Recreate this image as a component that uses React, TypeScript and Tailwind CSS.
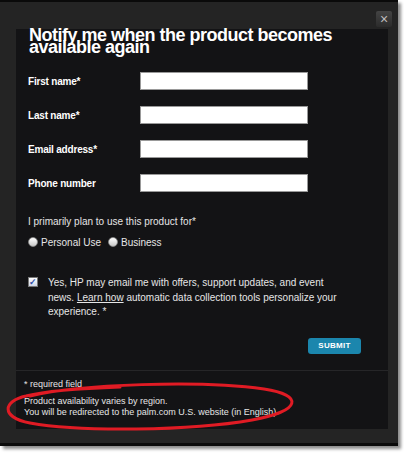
import React from "react"

const fields = ["First name*", "Last name*", "Email address*", "Phone number"]

function Radio({ label }: { label: string }) {
  return (
    <label className="flex items-center gap-[3px]">
      <span className="w-[10px] h-[10px] rounded-full bg-gradient-to-b from-white to-[#c8c8c8] border border-[#888]" />
      <span>{label}</span>
    </label>
  )
}

export default function App() {
  return (
    <div className="relative w-[404px] h-[453px] bg-white overflow-hidden" style={{ fontFamily: '"Liberation Sans", Arial, sans-serif' }}>
      <div className="w-[398px] h-[446px] bg-[#242424] border-t-2 border-b-[3px] border-[#0a0a0a] shadow-[3px_3px_3px_rgba(0,0,0,0.45)] relative">
        <button className="absolute left-[376px] top-[9px] w-[16px] h-[16px] rounded-[2px] bg-gradient-to-b from-[#444] to-[#2c2c2c] text-[#bdbdbd] text-[14px] leading-[16px] text-center">
          ×
        </button>
        <div className="ml-[16px] mt-[27px] w-[372px] h-[400px] bg-[#131315] flex flex-col">
          <h1 className="pl-[13px] text-white font-bold text-[18px] leading-[12px] tracking-[-0.5px] whitespace-nowrap">
            Notify me when the product becomes
            <br />
            available again
          </h1>
          <div className="mt-[19px] pl-[12px] flex flex-col gap-[16px]">
            {fields.map((f) => (
              <div key={f} className="flex items-center h-[18px]">
                <span className="w-[112px] text-white font-bold text-[10px] tracking-[-0.2px]">{f}</span>
                <input className="w-[168px] h-[18px] bg-white border border-[#999]" />
              </div>
            ))}
          </div>
          <p className="mt-[24px] pl-[12px] text-[#e6e6e6] text-[10px] leading-[12px]">I primarily plan to use this product for*</p>
          <div className="mt-[8px] pl-[12px] flex items-center h-[12px] gap-[7px] text-[#e6e6e6] text-[10px]">
            <Radio label="Personal Use" />
            <Radio label="Business" />
          </div>
          <div className="mt-[28px] pl-[12px] flex text-[#e6e6e6] text-[10px] leading-[14.5px]">
            <span className="mt-[1px] w-[10px] h-[10px] bg-gradient-to-b from-white to-[#cfd6e8] border border-[#777] text-[#3050a8] text-[9px] leading-[9px] text-center font-bold shrink-0">
              ✓
            </span>
            <p className="ml-[10px] whitespace-nowrap">
              Yes, HP may email me with offers, support updates, and event
              <br />
              news. <span className="underline">Learn how</span> automatic data collection tools personalize your
              <br />
              experience. *
            </p>
          </div>
          <div className="mt-[18px] pr-[27px] flex justify-end">
            <button className="w-[53px] h-[16px] rounded-[3px] bg-[#1b86ad] text-white font-bold text-[8px] tracking-[0.3px]">SUBMIT</button>
          </div>
          <div className="mt-[16px] border-t border-[#262628]" />
          <div className="pl-[8px] pt-[8px] text-[#e6e6e6] text-[9px] leading-[11px]">
            <p>* required field</p>
            <p className="mt-[6px]">Product availability varies by region.</p>
            <p>You will be redirected to the palm.com U.S. website (in English).</p>
          </div>
        </div>
      </div>
      <svg className="absolute left-0 top-0 pointer-events-none" width="404" height="453">
        <path
          d="M30 396 C80 384 200 380 264 389 C304 395 302 411 252 420 C190 431 80 432 30 423 C0 417 3 401 26 396 C50 390 90 388 120 387"
          fill="none"
          stroke="#e01b24"
          strokeWidth="3"
          strokeLinecap="round"
        />
      </svg>
    </div>
  )
}
